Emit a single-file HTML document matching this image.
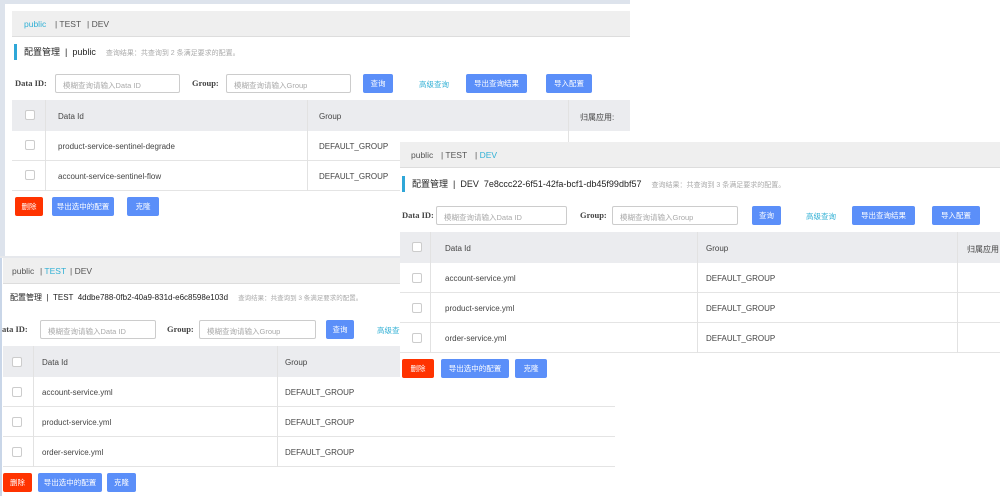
<!DOCTYPE html>
<html><head><meta charset="utf-8"><style>
*{box-sizing:border-box;margin:0;padding:0}
body{width:1000px;height:496px;overflow:hidden;background:#fff;position:relative;font-family:"Liberation Sans","Noto Sans CJK SC",sans-serif;color:#333;font-size:8px}
.p{position:absolute;background:#fff;overflow:hidden}
.a{position:absolute;white-space:nowrap}
.tab{position:absolute;left:0;top:0;right:0;height:26px;background:#efefef;border-bottom:1px solid #ddd}
.tab span{position:absolute;top:8px;font-size:8.5px;color:#555}
.tab .on{color:#31b0d5}
.tt{position:absolute;height:16px;border-left:3px solid #2fa7d8;padding-left:7px;font-size:9px;line-height:16px;color:#222;white-space:nowrap}
.tt small{font-size:7px;color:#aaa;margin-left:10px}
.lb{font-size:8.5px;font-weight:bold;color:#444;font-family:"Liberation Serif","Noto Serif CJK SC",serif}
.in{position:absolute;height:19px;border:1px solid #ccc;border-radius:2px;font-size:7.5px;color:#aaa;padding:5px 0 0 7px;white-space:nowrap;overflow:hidden}
.bt{position:absolute;height:19px;background:#5b8ff9;color:#fff;font-size:7.5px;text-align:center;line-height:19px;border-radius:2px}
.red{background:#ff3300}
.lk{color:#31b0d5;font-size:7.5px}
.th{position:absolute;left:0;right:0;height:31px;background:#ebecef}
.tr{position:absolute;left:0;right:0;height:30px;border-bottom:1px solid #e4e4e4}
.cb{position:absolute;width:10px;height:10px;border:1px solid #ccc;border-radius:2px;background:#fff}
.vl{position:absolute;width:1px;background:#e2e2e2}
.tx{position:absolute;font-size:8px;color:#444;white-space:nowrap}
</style></head><body>

<div class="a" style="left:0;top:0;width:630px;height:4px;background:#dde3ec"></div>
<div class="a" style="left:0;top:0;width:5px;height:258px;background:#dde3ec"></div>

<!-- Panel A (public) -->
<div class="p" style="left:12px;top:11px;width:618px;height:246px">
 <div class="tab"><span class="on" style="left:12px">public</span><span style="left:43px">| TEST</span><span style="left:75px">| DEV</span></div>
 <div class="tt" style="left:2px;top:33px">配置管理 &nbsp;|&nbsp; public<small>查询结果：共查询到 2 条满足要求的配置。</small></div>
 <div class="a lb" style="left:3px;top:67px">Data ID:</div>
 <div class="in" style="left:43px;top:63px;width:125px">模糊查询请输入Data ID</div>
 <div class="a lb" style="left:180px;top:67px">Group:</div>
 <div class="in" style="left:214px;top:63px;width:125px">模糊查询请输入Group</div>
 <div class="bt" style="left:351px;top:63px;width:30px">查询</div>
 <div class="a lk" style="left:407px;top:68px">高级查询</div>
 <div class="bt" style="left:454px;top:63px;width:61px">导出查询结果</div>
 <div class="bt" style="left:534px;top:63px;width:46px">导入配置</div>
 <div class="th" style="top:89px"></div>
 <div class="tr" style="top:120px"></div><div class="tr" style="top:150px"></div>
 <div class="vl" style="left:33px;top:89px;height:91px"></div>
 <div class="vl" style="left:295px;top:89px;height:91px"></div>
 <div class="vl" style="left:556px;top:89px;height:91px"></div>
 <div class="cb" style="left:13px;top:99px"></div><div class="cb" style="left:13px;top:129px"></div><div class="cb" style="left:13px;top:159px"></div>
 <div class="tx" style="left:46px;top:101px">Data Id</div>
 <div class="tx" style="left:307px;top:101px">Group</div>
 <div class="tx" style="left:568px;top:101px">归属应用:</div>
 <div class="tx" style="left:46px;top:131px">product-service-sentinel-degrade</div>
 <div class="tx" style="left:307px;top:131px">DEFAULT_GROUP</div>
 <div class="tx" style="left:46px;top:161px">account-service-sentinel-flow</div>
 <div class="tx" style="left:307px;top:161px">DEFAULT_GROUP</div>
 <div class="bt red" style="left:3px;top:186px;width:28px">删除</div>
 <div class="bt" style="left:40px;top:186px;width:62px">导出选中的配置</div>
 <div class="bt" style="left:115px;top:186px;width:32px">克隆</div>
</div>
<div class="a" style="left:0;top:256px;width:630px;height:2px;background:#e6e8ec"></div>

<!-- Panel B (TEST) -->
<div class="p" style="left:0;top:258px;width:615px;height:238px">
 <div class="a" style="left:0;top:0;width:2px;height:238px;background:#c9d6e8"></div>
 <div class="tab" style="left:3px"><span style="left:9px">public</span><span style="left:37px">| <b style="font-weight:normal;color:#31b0d5">TEST</b></span><span style="left:67px">| DEV</span></div>
 <div class="tt" style="left:8px;top:32px;border-left:none;padding-left:2px;font-size:8px">配置管理 &nbsp;|&nbsp; TEST &nbsp;4ddbe788-0fb2-40a9-831d-e6c8598e103d<small style="font-size:6.5px">查询结果：共查询到 3 条满足要求的配置。</small></div>
 <div class="a lb" style="left:2px;top:66px">ata ID:</div>
 <div class="in" style="left:40px;top:62px;width:116px">模糊查询请输入Data ID</div>
 <div class="a lb" style="left:167px;top:66px">Group:</div>
 <div class="in" style="left:199px;top:62px;width:117px">模糊查询请输入Group</div>
 <div class="bt" style="left:326px;top:62px;width:28px">查询</div>
 <div class="a lk" style="left:377px;top:67px">高级查询</div>
 <div class="th" style="left:3px;top:88px"></div>
 <div class="tr" style="left:3px;top:119px"></div><div class="tr" style="left:3px;top:149px"></div><div class="tr" style="left:3px;top:179px"></div>
 <div class="vl" style="left:33px;top:88px;height:121px"></div>
 <div class="vl" style="left:277px;top:88px;height:121px"></div>
 <div class="cb" style="left:12px;top:99px"></div><div class="cb" style="left:12px;top:129px"></div><div class="cb" style="left:12px;top:159px"></div><div class="cb" style="left:12px;top:189px"></div>
 <div class="tx" style="left:42px;top:100px">Data Id</div>
 <div class="tx" style="left:285px;top:100px">Group</div>
 <div class="tx" style="left:42px;top:130px">account-service.yml</div><div class="tx" style="left:285px;top:130px">DEFAULT_GROUP</div>
 <div class="tx" style="left:42px;top:160px">product-service.yml</div><div class="tx" style="left:285px;top:160px">DEFAULT_GROUP</div>
 <div class="tx" style="left:42px;top:190px">order-service.yml</div><div class="tx" style="left:285px;top:190px">DEFAULT_GROUP</div>
 <div class="bt red" style="left:3px;top:215px;width:29px">删除</div>
 <div class="bt" style="left:38px;top:215px;width:64px">导出选中的配置</div>
 <div class="bt" style="left:107px;top:215px;width:29px">克隆</div>
</div>

<!-- Panel C (DEV) -->
<div class="p" style="left:400px;top:142px;width:600px;height:238px">
 <div class="tab"><span style="left:11px">public</span><span style="left:41px">| TEST</span><span style="left:75px">| <b style="font-weight:normal;color:#31b0d5">DEV</b></span></div>
 <div class="tt" style="left:2px;top:34px">配置管理 &nbsp;|&nbsp; DEV &nbsp;7e8ccc22-6f51-42fa-bcf1-db45f99dbf57<small>查询结果：共查询到 3 条满足要求的配置。</small></div>
 <div class="a lb" style="left:2px;top:68px">Data ID:</div>
 <div class="in" style="left:36px;top:64px;width:131px">模糊查询请输入Data ID</div>
 <div class="a lb" style="left:180px;top:68px">Group:</div>
 <div class="in" style="left:212px;top:64px;width:126px">模糊查询请输入Group</div>
 <div class="bt" style="left:352px;top:64px;width:29px">查询</div>
 <div class="a lk" style="left:406px;top:69px">高级查询</div>
 <div class="bt" style="left:452px;top:64px;width:63px">导出查询结果</div>
 <div class="bt" style="left:532px;top:64px;width:48px">导入配置</div>
 <div class="th" style="top:90px"></div>
 <div class="tr" style="top:121px"></div><div class="tr" style="top:151px"></div><div class="tr" style="top:181px"></div>
 <div class="vl" style="left:30px;top:90px;height:121px"></div>
 <div class="vl" style="left:297px;top:90px;height:121px"></div>
 <div class="vl" style="left:557px;top:90px;height:121px"></div>
 <div class="cb" style="left:12px;top:100px"></div><div class="cb" style="left:12px;top:131px"></div><div class="cb" style="left:12px;top:161px"></div><div class="cb" style="left:12px;top:191px"></div>
 <div class="tx" style="left:45px;top:102px">Data Id</div>
 <div class="tx" style="left:306px;top:102px">Group</div>
 <div class="tx" style="left:567px;top:102px">归属应用</div>
 <div class="tx" style="left:45px;top:132px">account-service.yml</div><div class="tx" style="left:306px;top:132px">DEFAULT_GROUP</div>
 <div class="tx" style="left:45px;top:162px">product-service.yml</div><div class="tx" style="left:306px;top:162px">DEFAULT_GROUP</div>
 <div class="tx" style="left:45px;top:192px">order-service.yml</div><div class="tx" style="left:306px;top:192px">DEFAULT_GROUP</div>
 <div class="bt red" style="left:2px;top:217px;width:32px">删除</div>
 <div class="bt" style="left:41px;top:217px;width:68px">导出选中的配置</div>
 <div class="bt" style="left:115px;top:217px;width:32px">克隆</div>
</div>
</body></html>
